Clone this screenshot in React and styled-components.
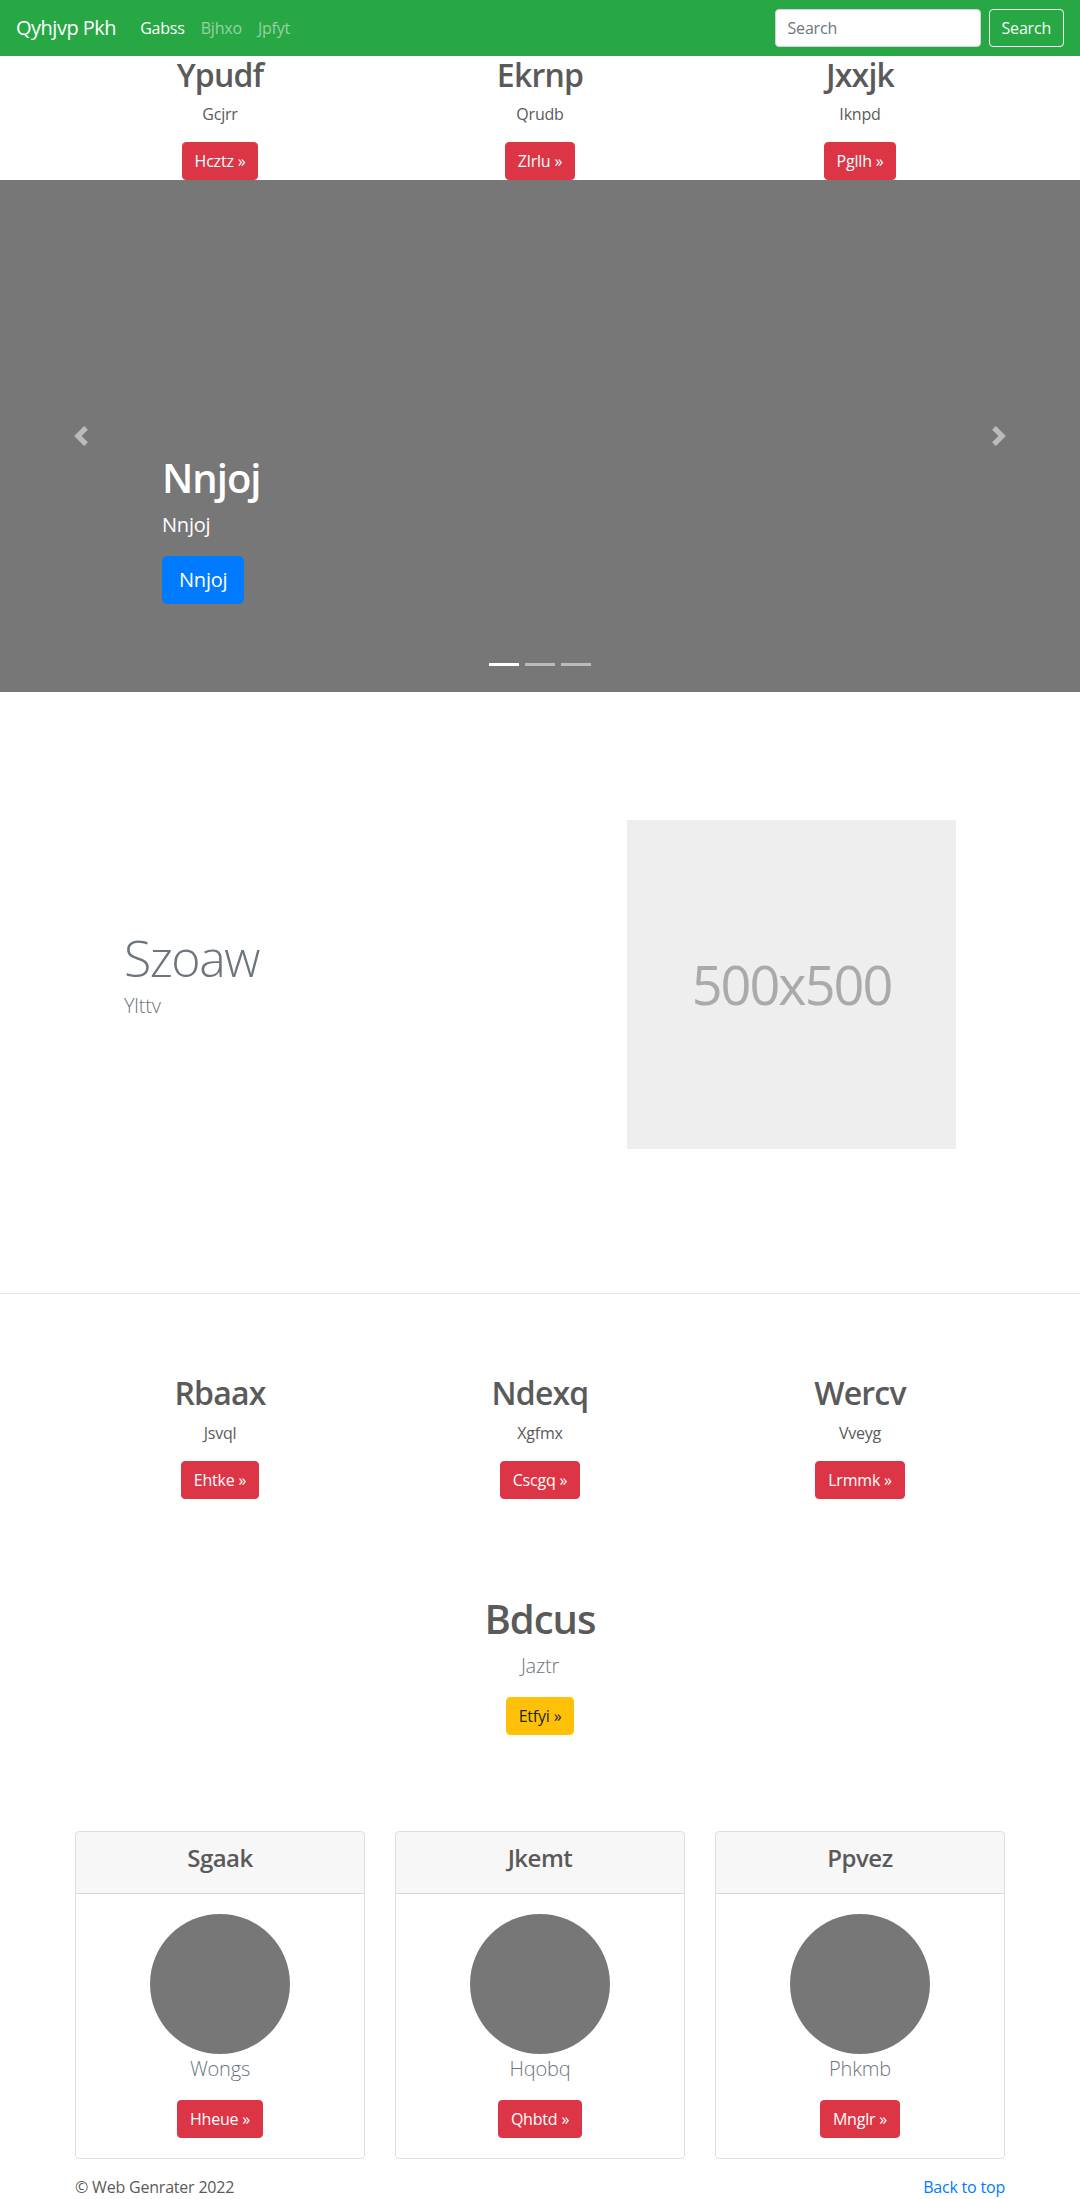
import React from 'react';
import styled, { createGlobalStyle, css } from 'styled-components';

const Global = createGlobalStyle`
  html, body { margin: 0; padding: 0; }
  body {
    font-family: "Open Sans", "Noto Sans", "Liberation Sans", sans-serif;
    font-size: 16px;
    line-height: 1.5;
    letter-spacing: -0.2px;
    color: #5a5a5a;
    background: #fff;
  }
  *, *::before, *::after { box-sizing: border-box; }
`;

/* ---------- Navbar ---------- */
const Navbar = styled.nav`
  height: 56px;
  background: #28a745;
  display: flex;
  align-items: center;
  padding: 0 16px;
`;
const Brand = styled.a`
  font-size: 20px;
  line-height: 30px;
  letter-spacing: -0.5px;
  color: #fff;
  text-decoration: none;
  margin-right: 16px;
`;
const NavList = styled.div`
  display: flex;
  align-items: center;
`;
const NavLink = styled.a`
  padding: 8px;
  color: ${p => (p.$active ? '#fff' : 'rgba(255,255,255,0.5)')};
  text-decoration: none;
`;
const SearchForm = styled.form`
  margin-left: auto;
  display: flex;
  align-items: center;
`;
const SearchInput = styled.input`
  width: 206px;
  height: 38px;
  padding: 6px 12px;
  font: inherit;
  letter-spacing: inherit;
  color: #495057;
  border: 1px solid #ced4da;
  border-radius: 4px;
  margin-right: 8px;
  &::placeholder { color: #6c757d; }
`;
const OutlineButton = styled.button`
  height: 38px;
  padding: 6px 12px;
  font: inherit;
  letter-spacing: inherit;
  color: #f8f9fa;
  background: transparent;
  border: 1px solid #f8f9fa;
  border-radius: 4px;
`;

/* ---------- Shared ---------- */
const Container = styled.div`
  width: 960px;
  margin: 0 auto;
`;
const MarketingRow = styled.div`
  display: grid;
  grid-template-columns: repeat(3, 1fr);
  padding-top: ${p => p.$pt || 0}px;
`;
const MarketingCol = styled.div`
  padding: 0 15px;
  text-align: center;
`;
const ColTitle = styled.h2`
  font-size: 32px;
  font-weight: 600;
  line-height: 1.2;
  letter-spacing: -0.8px;
  margin: 0 0 8px;
`;
const ColText = styled.p`
  margin: 0 0 16px;
`;
const ButtonRow = styled.div`
  display: flex;
  justify-content: ${p => p.$align || 'center'};
`;
const variants = {
  danger: css`background: #dc3545; border-color: #dc3545; color: #fff;`,
  warning: css`background: #ffc107; border-color: #ffc107; color: #212529;`,
  primary: css`background: #007bff; border-color: #007bff; color: #fff;`,
};
const Button = styled.a`
  display: inline-block;
  border: 1px solid transparent;
  text-decoration: none;
  white-space: nowrap;
  ${p => variants[p.$variant || 'danger']}
  ${p =>
    p.$lg
      ? css`font-size: 20px; line-height: 30px; padding: 8px 16px; border-radius: 5px;`
      : css`font-size: 16px; line-height: 24px; padding: 6px 12px; border-radius: 4px;`}
`;

/* ---------- Carousel ---------- */
const Carousel = styled.section`
  position: relative;
  height: 512px;
  background: #777;
  overflow: hidden;
`;
const Control = styled.a`
  position: absolute;
  top: 0;
  bottom: 0;
  ${p => (p.$side === 'left' ? 'left: 0;' : 'right: 0;')}
  width: 15%;
  display: flex;
  align-items: center;
  justify-content: center;
  opacity: 0.5;
`;
const Caption = styled.div`
  position: absolute;
  left: 15%;
  right: 15%;
  bottom: 68px;
  padding: 20px 0;
  color: #fff;
  text-align: left;
`;
const CaptionTitle = styled.h1`
  font-size: 40px;
  font-weight: 600;
  line-height: 1.2;
  letter-spacing: -1px;
  margin: 0 0 8px;
`;
const CaptionText = styled.p`
  font-size: 20px;
  line-height: 30px;
  margin: 0 0 16px;
`;
const Indicators = styled.ol`
  position: absolute;
  left: 0;
  right: 0;
  bottom: 26px;
  margin: 0;
  padding: 0;
  list-style: none;
  display: flex;
  justify-content: center;
`;
const Indicator = styled.li`
  width: 30px;
  height: 3px;
  margin: 0 3px;
  background: #fff;
  opacity: ${p => (p.$active ? 1 : 0.5)};
`;

/* ---------- Featurette ---------- */
const Featurette = styled.section`
  display: grid;
  grid-template-columns: 1fr 329px;
  align-items: center;
  padding: 128px 124px 144px;
`;
const FeatureHeading = styled.h2`
  font-size: 50px;
  font-weight: 300;
  line-height: 1;
  letter-spacing: -1.5px;
  color: #6c757d;
  margin: 0 0 8px;
`;
const Lead = styled.p`
  font-size: 20px;
  font-weight: 300;
  line-height: 30px;
  color: #6c757d;
  margin: 0 0 16px;
`;
const Placeholder = styled.div`
  width: 329px;
  height: 329px;
  background: #eee;
  color: #aaa;
  display: flex;
  align-items: center;
  justify-content: center;
  font-size: 54px;
  letter-spacing: -2px;
`;
const Divider = styled.hr`
  margin: 0;
  border: 0;
  border-top: 1px solid rgba(0, 0, 0, 0.1);
`;

/* ---------- Pricing header ---------- */
const PricingHeader = styled.section`
  padding-top: 96px;
  text-align: center;
`;
const PricingTitle = styled.h1`
  font-size: 40px;
  font-weight: 600;
  line-height: 1.2;
  letter-spacing: -1px;
  margin: 0 0 8px;
`;

/* ---------- Cards ---------- */
const CardDeck = styled.div`
  display: grid;
  grid-template-columns: repeat(3, 290px);
  gap: 30px;
  padding: 96px 15px 0;
`;
const Card = styled.div`
  border: 1px solid rgba(0, 0, 0, 0.125);
  border-radius: 4px;
  text-align: center;
  overflow: hidden;
`;
const CardHeader = styled.div`
  padding: 12px 20px;
  background: rgba(0, 0, 0, 0.03);
  border-bottom: 1px solid rgba(0, 0, 0, 0.125);
`;
const CardTitle = styled.h4`
  font-size: 24px;
  font-weight: 600;
  line-height: 1.2;
  letter-spacing: -0.5px;
  margin: 0 0 8px;
`;
const CardBody = styled.div`
  padding: 20px;
  display: flex;
  flex-direction: column;
  align-items: center;
`;
const Avatar = styled.div`
  width: 140px;
  height: 140px;
  border-radius: 50%;
  background: #777;
`;

/* ---------- Footer ---------- */
const Footer = styled.footer`
  display: flex;
  justify-content: space-between;
  padding: 16px 15px 0;
`;
const FooterText = styled.p`
  margin: 0;
`;
const FooterLink = styled.a`
  color: #007bff;
  text-decoration: none;
`;

const Chevron = ({ dir }) => (
  <svg width="20" height="20" viewBox="0 0 8 8" fill="#fff">
    {dir === 'left' ? (
      <path d="M5.25 0l-4 4 4 4 1.5-1.5L4.25 4l2.5-2.5L5.25 0z" />
    ) : (
      <path d="M2.75 0l-1.5 1.5L3.75 4l-2.5 2.5L2.75 8l4-4-4-4z" />
    )}
  </svg>
);

const topCols = [
  { t: 'Ypudf', p: 'Gcjrr', b: 'Hcztz' },
  { t: 'Ekrnp', p: 'Qrudb', b: 'Zlrlu' },
  { t: 'Jxxjk', p: 'Iknpd', b: 'Pgllh' },
];
const midCols = [
  { t: 'Rbaax', p: 'Jsvql', b: 'Ehtke' },
  { t: 'Ndexq', p: 'Xgfmx', b: 'Cscgq' },
  { t: 'Wercv', p: 'Vveyg', b: 'Lrmmk' },
];
const cards = [
  { t: 'Sgaak', n: 'Wongs', b: 'Hheue' },
  { t: 'Jkemt', n: 'Hqobq', b: 'Qhbtd' },
  { t: 'Ppvez', n: 'Phkmb', b: 'Mnglr' },
];

function Marketing({ cols, pt }) {
  return (
    <Container>
      <MarketingRow $pt={pt}>
        {cols.map(c => (
          <MarketingCol key={c.t}>
            <ColTitle>{c.t}</ColTitle>
            <ColText>{c.p}</ColText>
            <ButtonRow>
              <Button href="#">{c.b} »</Button>
            </ButtonRow>
          </MarketingCol>
        ))}
      </MarketingRow>
    </Container>
  );
}

export default function App() {
  return (
    <>
      <Global />
      <Navbar>
        <Brand href="#">Qyhjvp Pkh</Brand>
        <NavList>
          <NavLink href="#" $active>Gabss</NavLink>
          <NavLink href="#">Bjhxo</NavLink>
          <NavLink href="#">Jpfyt</NavLink>
        </NavList>
        <SearchForm onSubmit={e => e.preventDefault()}>
          <SearchInput type="text" placeholder="Search" />
          <OutlineButton type="submit">Search</OutlineButton>
        </SearchForm>
      </Navbar>

      <Marketing cols={topCols} pt={0} />

      <Carousel>
        <Control $side="left" href="#"><Chevron dir="left" /></Control>
        <Control $side="right" href="#"><Chevron dir="right" /></Control>
        <Caption>
          <CaptionTitle>Nnjoj</CaptionTitle>
          <CaptionText>Nnjoj</CaptionText>
          <ButtonRow $align="flex-start">
            <Button href="#" $variant="primary" $lg>Nnjoj</Button>
          </ButtonRow>
        </Caption>
        <Indicators>
          <Indicator $active />
          <Indicator />
          <Indicator />
        </Indicators>
      </Carousel>

      <Featurette>
        <div>
          <FeatureHeading>Szoaw</FeatureHeading>
          <Lead>Ylttv</Lead>
        </div>
        <Placeholder>500x500</Placeholder>
      </Featurette>
      <Divider />

      <Marketing cols={midCols} pt={80} />

      <PricingHeader>
        <PricingTitle>Bdcus</PricingTitle>
        <Lead>Jaztr</Lead>
        <ButtonRow>
          <Button href="#" $variant="warning">Etfyi »</Button>
        </ButtonRow>
      </PricingHeader>

      <Container>
        <CardDeck>
          {cards.map(c => (
            <Card key={c.t}>
              <CardHeader>
                <CardTitle>{c.t}</CardTitle>
              </CardHeader>
              <CardBody>
                <Avatar />
                <Lead>{c.n}</Lead>
                <Button href="#">{c.b} »</Button>
              </CardBody>
            </Card>
          ))}
        </CardDeck>
        <Footer>
          <FooterText>© Web Genrater 2022</FooterText>
          <FooterLink href="#">Back to top</FooterLink>
        </Footer>
      </Container>
    </>
  );
}
